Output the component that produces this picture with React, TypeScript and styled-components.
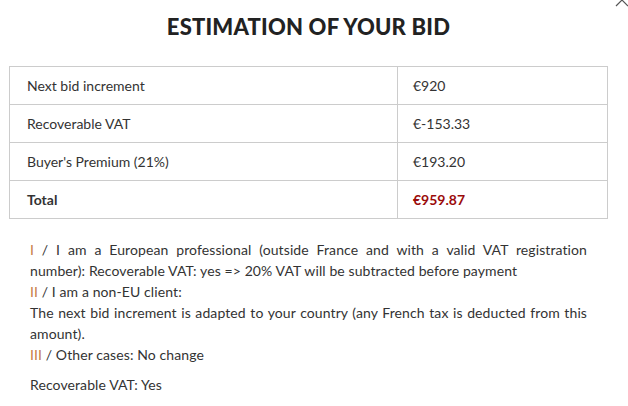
import styled, { createGlobalStyle } from 'styled-components';

const GlobalStyle = createGlobalStyle`
  html, body {
    margin: 0;
    padding: 0;
    background: #fff;
  }
  body {
    font-family: Lato, "Liberation Sans", sans-serif;
    color: #333;
  }
`;

const rows = [
  { id: 1, label: 'Next bid increment', value: '€920' },
  { id: 2, label: 'Recoverable VAT', value: '€-153.33' },
  { id: 3, label: "Buyer's Premium (21%)", value: '€193.20' },
];

const App = () => {
  return (
    <>
      <GlobalStyle />
      <Modal>
        <CloseButton aria-label="Close">
          <svg width="16" height="16" viewBox="0 0 16 16">
            <path d="M2 2 L14 14 M14 2 L2 14" stroke="#555" strokeWidth="1.2" fill="none" />
          </svg>
        </CloseButton>
        <Title>ESTIMATION OF YOUR BID</Title>
        <BidTable>
          <tbody>
            {rows.map((row) => (
              <tr key={row.id}>
                <Cell>{row.label}</Cell>
                <Cell $value>{row.value}</Cell>
              </tr>
            ))}
            <tr>
              <Cell $total>Total</Cell>
              <Cell $value $total $red>€959.87</Cell>
            </tr>
          </tbody>
        </BidTable>
        <Notes>
          <p>
            <Numeral>I</Numeral> / I am a European professional (outside France and with a valid VAT
            registration number): Recoverable VAT: yes =&gt; 20% VAT will be subtracted before payment
            <br />
            <Numeral>II</Numeral> / I am a non-EU client:
            <br />
            The next bid increment is adapted to your country (any French tax is deducted from this
            amount).
            <br />
            <Numeral>III</Numeral> / Other cases: No change
          </p>
          <Status>Recoverable VAT: Yes</Status>
        </Notes>
      </Modal>
    </>
  );
};

export default App;

const Modal = styled.div`
  position: relative;
  width: 628px;
  height: 406px;
  box-sizing: border-box;
  padding: 12px 20px 0 9px;
  overflow: hidden;
`;

const CloseButton = styled.button`
  position: absolute;
  top: -8px;
  right: -2px;
  padding: 0;
  border: 0;
  background: none;
  line-height: 0;
`;

const Title = styled.h2`
  margin: 0 0 24px;
  text-align: center;
  font-size: 22px;
  line-height: 30px;
  font-weight: 900;
  color: #222;
  letter-spacing: 0.2px;
`;

const BidTable = styled.table`
  width: 100%;
  border-collapse: collapse;
  border: 1px solid #ccc;
  font-size: 14px;
`;

const Cell = styled.td<{ $value?: boolean; $total?: boolean; $red?: boolean }>`
  height: 37px;
  padding: 0 0 0 ${(p) => (p.$value ? '15px' : '17px')};
  border: 1px solid #ccc;
  width: ${(p) => (p.$value ? '194px' : 'auto')};
  font-weight: ${(p) => (p.$total ? 700 : 400)};
  color: ${(p) => (p.$red ? '#9b0b0b' : '#333')};
`;

const Notes = styled.div`
  padding: 0 21px;
  margin-top: 20px;
  font-size: 14px;
  line-height: 21px;
  letter-spacing: 0.1px;
  text-align: justify;

  p {
    margin: 0;
  }
`;

const Numeral = styled.span`
  color: #c57a45;
`;

const Status = styled.p`
  margin-top: 9px !important;
`;
